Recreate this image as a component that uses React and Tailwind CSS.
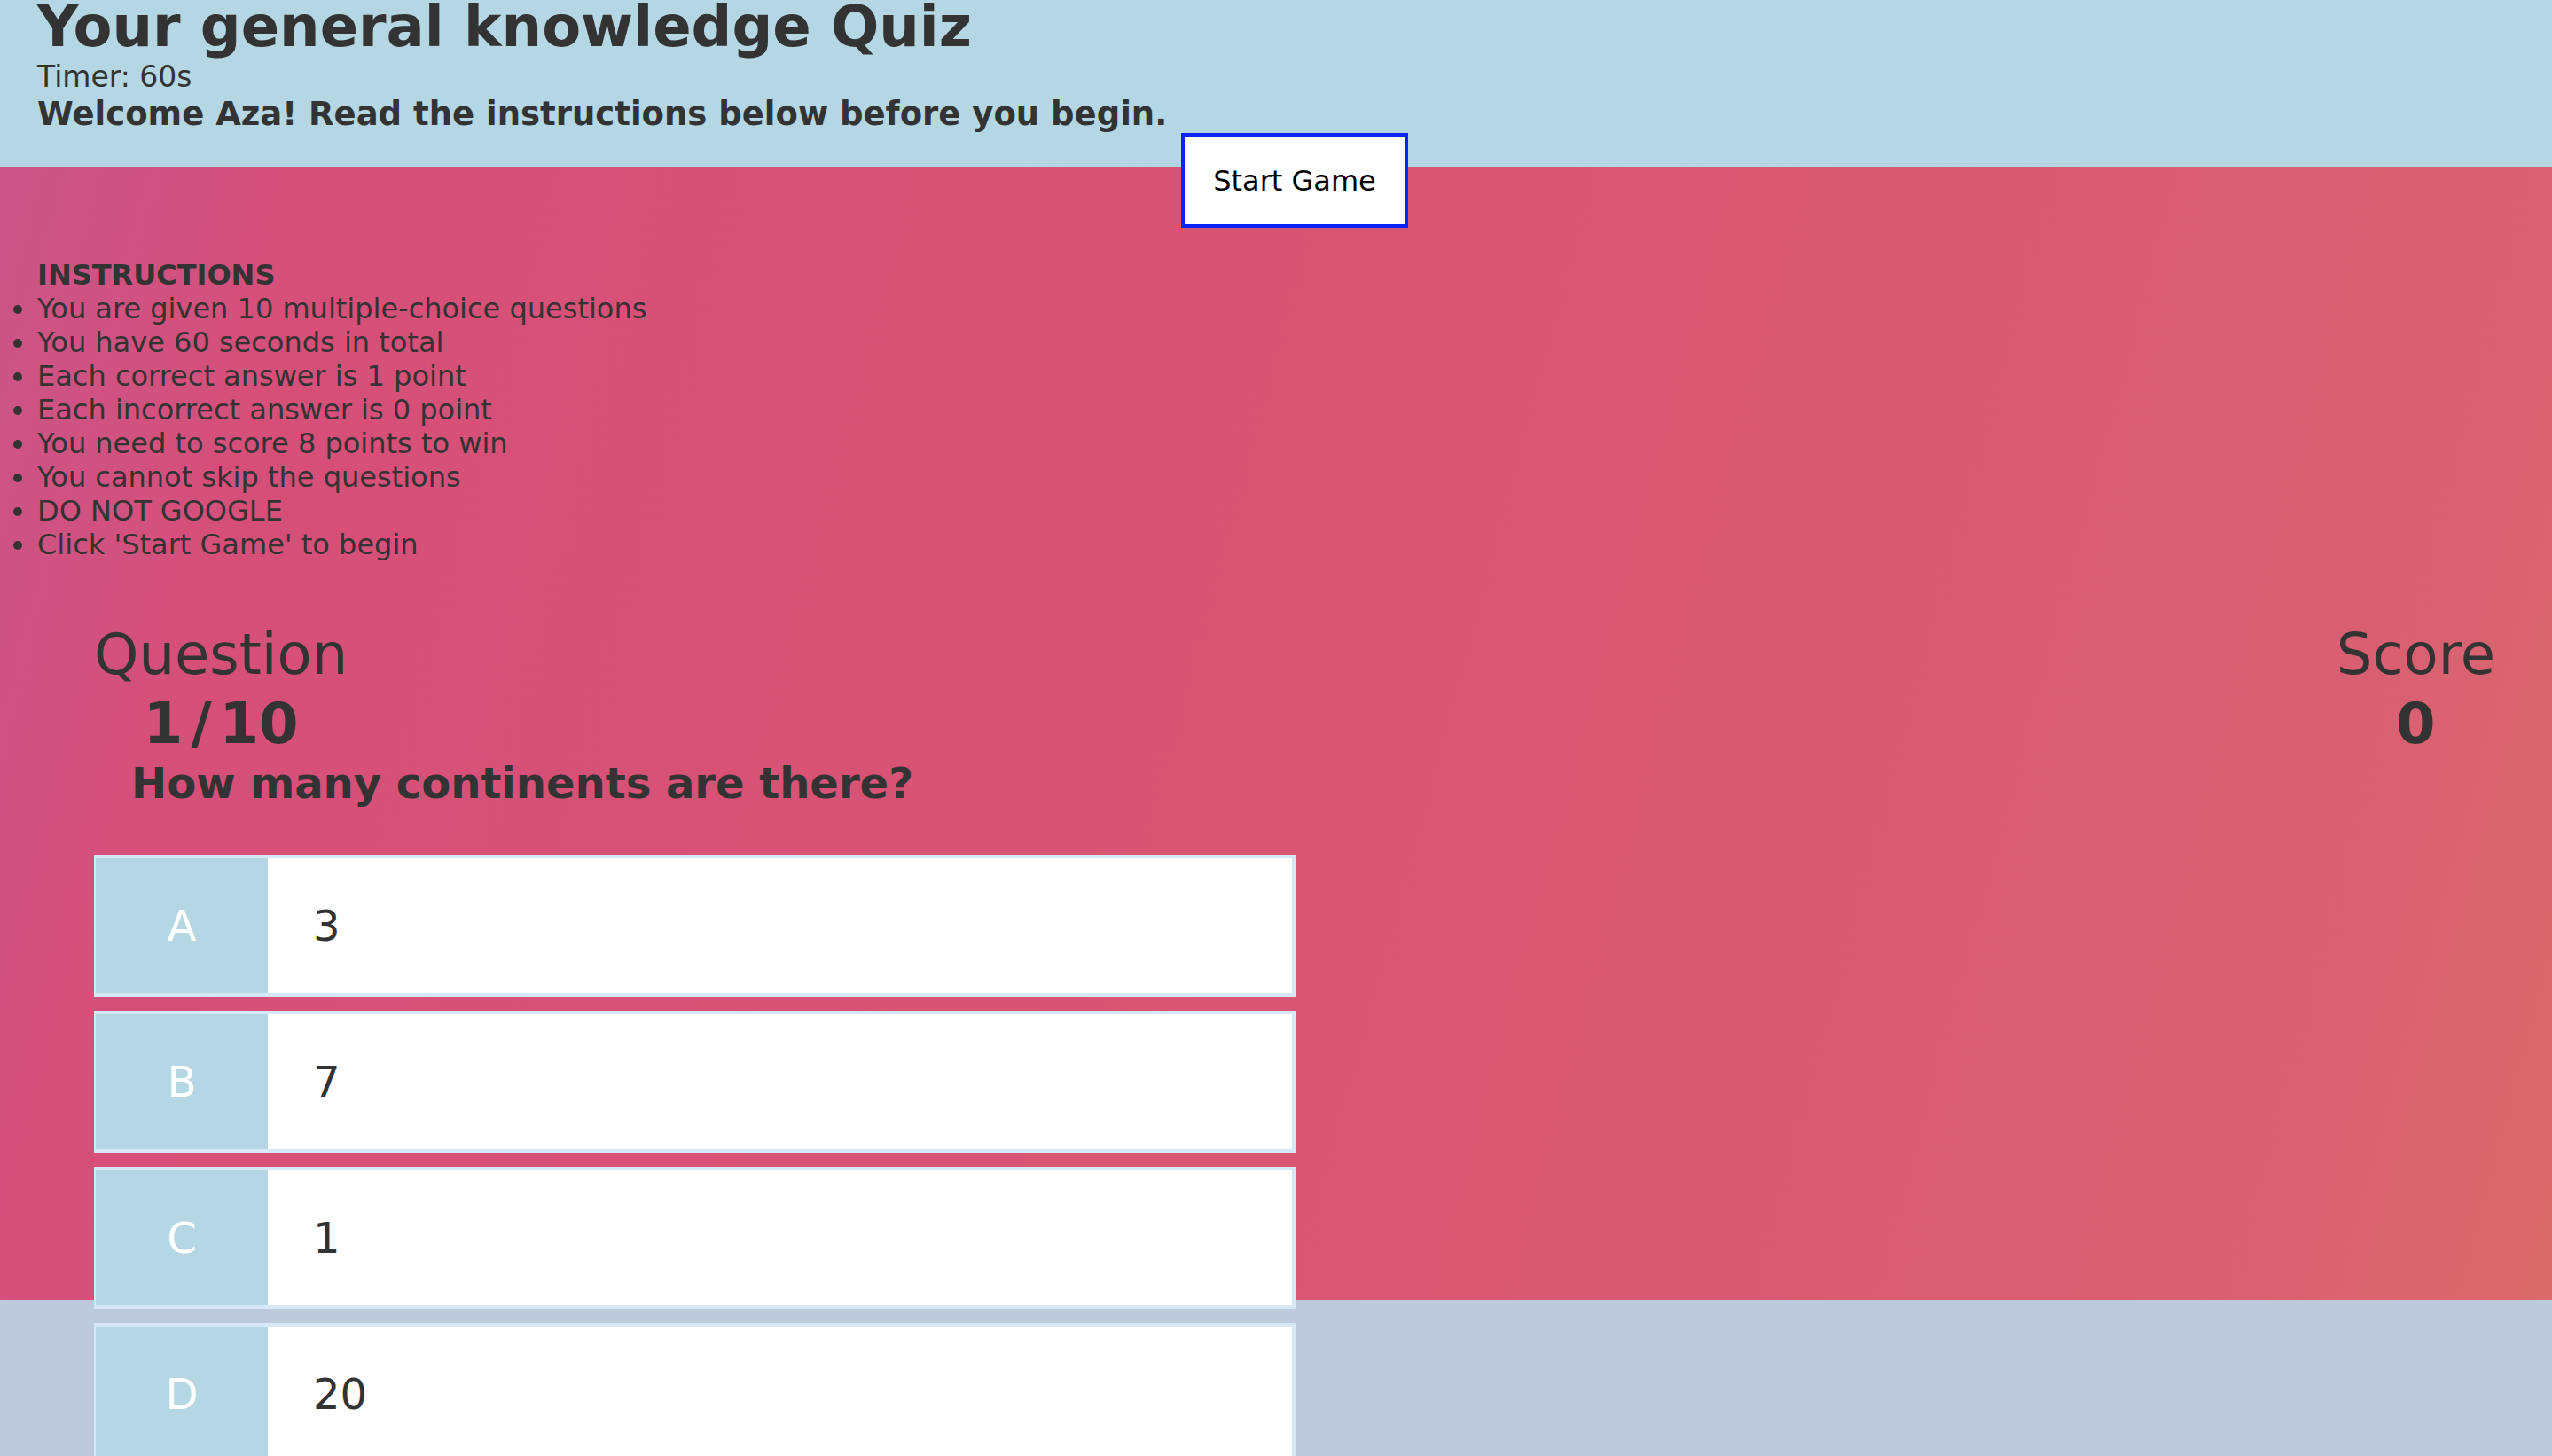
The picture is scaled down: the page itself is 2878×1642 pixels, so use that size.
export default function App() {
  const items = [
    "You are given 10 multiple-choice questions",
    "You have 60 seconds in total",
    "Each correct answer is 1 point",
    "Each incorrect answer is 0 point",
    "You need to score 8 points to win",
    "You cannot skip the questions",
    "DO NOT GOOGLE",
    "Click 'Start Game' to begin",
  ];
  const answers = [
    ["A", "3"],
    ["B", "7"],
    ["C", "1"],
    ["D", "20"],
  ];
  return (
    <div className="min-h-screen w-full overflow-hidden bg-[#bdcadc] font-['DejaVu_Sans',Verdana,sans-serif] text-[#333333]">
      <header className="h-[188px] bg-[#b4d7e3] pl-[42px]">
        <h1 className="text-[64px] font-bold leading-[60px]">Your general knowledge Quiz</h1>
        <p className="mt-[11px] text-[33px] leading-[32px]">Timer: 60s</p>
        <h3 className="mt-[6px] text-[37px] font-bold leading-[40px]">
          Welcome Aza! Read the instructions below before you begin.
        </h3>
        <button className="relative z-10 ml-[1290px] mt-[1px] block h-[107px] w-[256px] border-4 border-[#0a24f5] bg-white text-[32px] leading-[38px] text-black">
          Start Game
        </button>
      </header>

      <main className="h-[1278px] bg-[linear-gradient(105deg,#ca5587_0%,#d64f79_12%,#d85573_50%,#d95f72_88%,#dc6b6b_100%)]">
        <div className="pt-[103px]">
          <h4 className="pl-[42px] text-[32px] font-bold leading-[38px]">INSTRUCTIONS</h4>
          <ul className="list-disc pl-[42px] text-[32px] leading-[38px]">
            {items.map((t) => (
              <li key={t}>{t}</li>
            ))}
          </ul>
        </div>

        <div className="mt-[66px] flex justify-between pl-[106px] pr-[64px]">
          <div className="text-center text-[64px] leading-[78px]">
            <p>Question</p>
            <p className="font-bold">
              1<span className="mx-[9px]">/</span>10
            </p>
          </div>
          <div className="text-center text-[64px] leading-[78px]">
            <p>Score</p>
            <p className="font-bold">0</p>
          </div>
        </div>

        <p className="ml-[148px] text-[48px] font-bold leading-[56px]">How many continents are there?</p>

        <div className="ml-[106px] mt-[53px] flex w-[1355px] flex-col gap-[16px]">
          {answers.map(([l, a]) => (
            <div
              key={l}
              className="flex h-[160px] border-4 border-l-2 border-[#d6e7f6] bg-white"
            >
              <div className="flex w-[194px] items-center justify-center bg-[#b4d7e3] text-[48px] text-white">
                {l}
              </div>
              <div className="flex items-center pl-[51px] text-[48px]">{a}</div>
            </div>
          ))}
        </div>
      </main>
    </div>
  );
}
